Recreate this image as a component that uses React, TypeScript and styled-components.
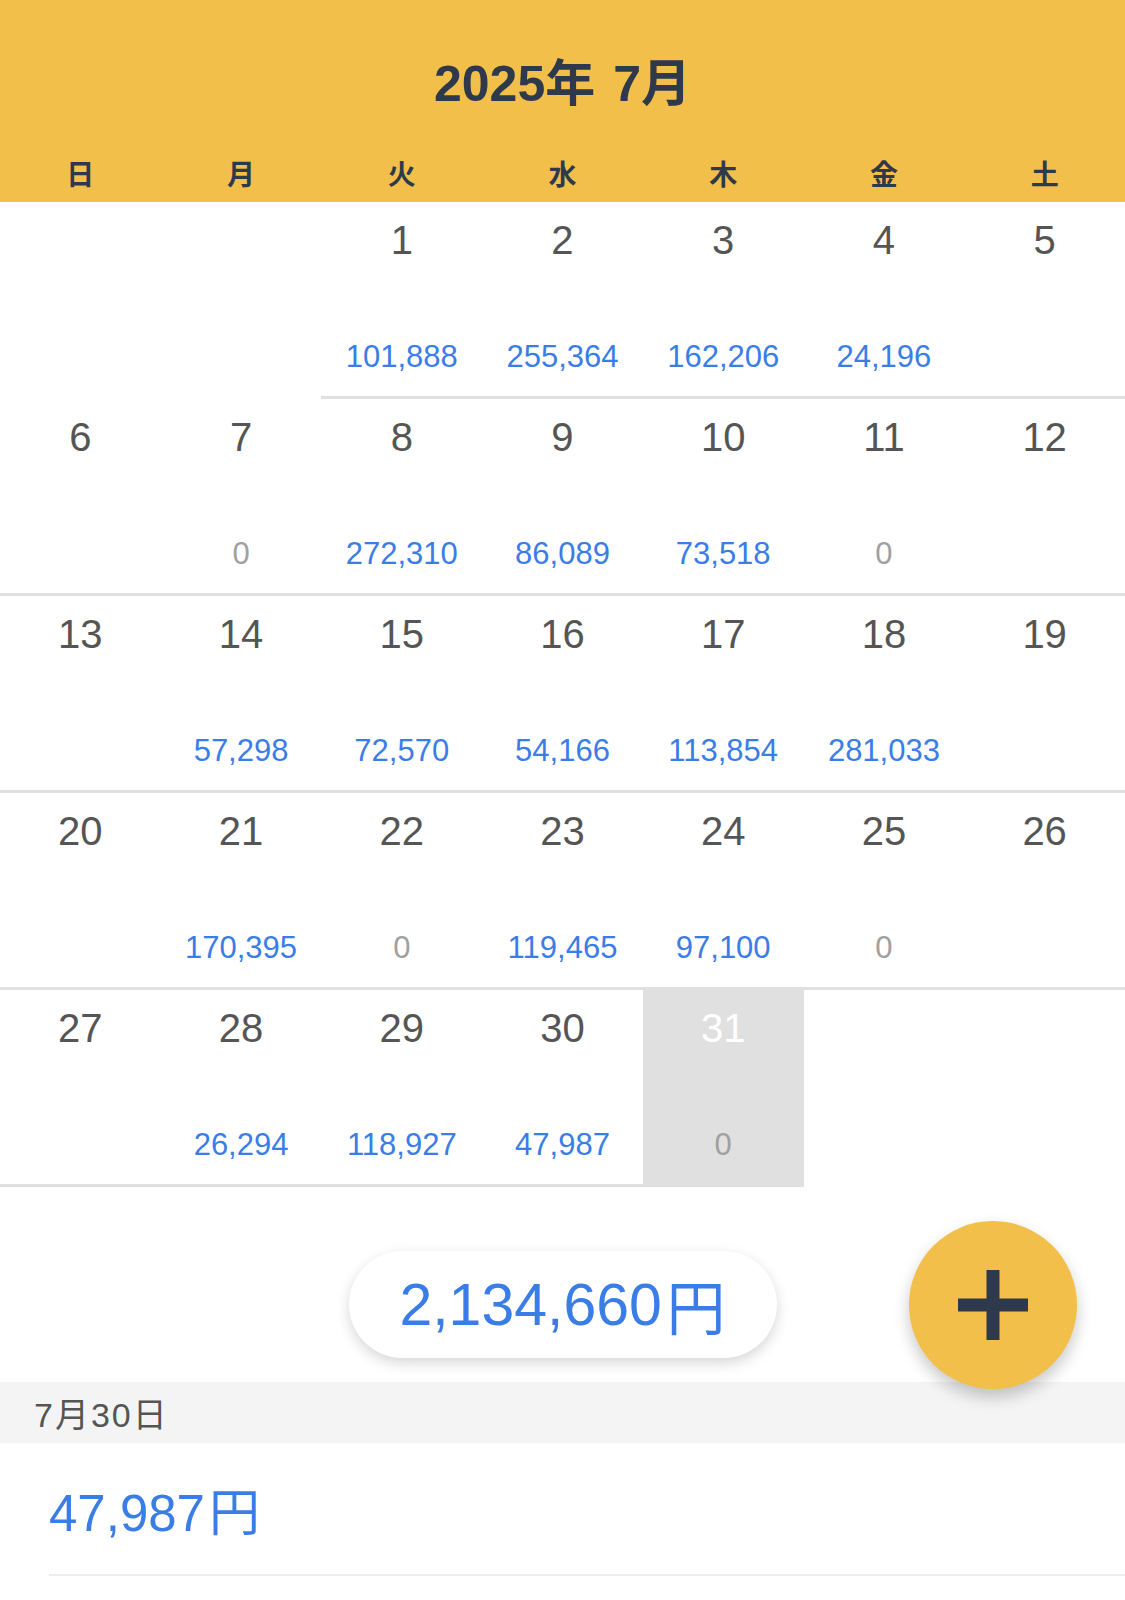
import styled, { createGlobalStyle } from "styled-components";

const GlobalStyle = createGlobalStyle`
  body {
    margin: 0;
    background: #ffffff;
    font-family: "Liberation Sans", "Noto Sans CJK JP", sans-serif;
  }
`;

const WEEKDAYS = ["日", "月", "火", "水", "木", "金", "土"];

// amounts per day in July; null = no record
const AMOUNTS: Record<number, number | null> = {
  1: 101888, 2: 255364, 3: 162206, 4: 24196, 5: null,
  6: null, 7: 0, 8: 272310, 9: 86089, 10: 73518, 11: 0, 12: null,
  13: null, 14: 57298, 15: 72570, 16: 54166, 17: 113854, 18: 281033, 19: null,
  20: null, 21: 170395, 22: 0, 23: 119465, 24: 97100, 25: 0, 26: null,
  27: null, 28: 26294, 29: 118927, 30: 47987, 31: 0,
};

const FIRST_WEEKDAY = 2; // July 1st 2025 is a Tuesday
const DAYS = 31;
const TODAY = 31;

const fmt = (n: number) => n.toLocaleString("en-US");

export default function App() {
  const cells: (number | null)[] = [];
  for (let i = 0; i < FIRST_WEEKDAY; i++) cells.push(null);
  for (let d = 1; d <= DAYS; d++) cells.push(d);
  while (cells.length % 7 !== 0) cells.push(null);

  return (
    <>
      <GlobalStyle />
      <Page>
        <Header>
          <Title>
            2025年<Gap />7月
          </Title>
          <WeekRow>
            {WEEKDAYS.map((w) => (
              <WeekLabel key={w}>{w}</WeekLabel>
            ))}
          </WeekRow>
        </Header>

        <Grid>
          {cells.map((day, i) => {
            if (day === null) return <EmptyCell key={`e${i}`} />;
            const amount = AMOUNTS[day];
            const today = day === TODAY;
            return (
              <DayCell key={day} $today={today}>
                <DayNumber $today={today}>{day}</DayNumber>
                <DayAmount $zero={amount === 0}>
                  {amount === null || amount === undefined ? "" : fmt(amount)}
                </DayAmount>
              </DayCell>
            );
          })}
        </Grid>

        <Summary>
          <TotalPill>
            2,134,660<Yen>円</Yen>
          </TotalPill>
          <AddButton aria-label="追加">
            <svg width="70" height="70" viewBox="0 0 70 70">
              <rect x="0" y="28.5" width="70" height="13" fill="#2e3a4b" />
              <rect x="28.5" y="0" width="13" height="70" fill="#2e3a4b" />
            </svg>
          </AddButton>
        </Summary>

        <DateBar>7月30日</DateBar>
        <EntryRow>
          <EntryAmount>
            47,987<Yen>円</Yen>
          </EntryAmount>
        </EntryRow>
      </Page>
    </>
  );
}

const Page = styled.div`
  width: 1125px;
  min-height: 1600px;
  background: #ffffff;
`;

const Header = styled.header`
  background: #f3bf4b;
  height: 202px;
  box-sizing: border-box;
  padding-top: 54px;
  display: flex;
  flex-direction: column;
`;

const Title = styled.h1`
  margin: 0;
  text-align: center;
  font-size: 50px;
  line-height: 60px;
  font-weight: 700;
  color: #2e3a4b;
`;

const Gap = styled.span`
  display: inline-block;
  width: 18px;
`;

const WeekRow = styled.div`
  display: grid;
  grid-template-columns: repeat(7, 1fr);
  margin-top: 44px;
`;

const WeekLabel = styled.div`
  text-align: center;
  font-size: 28px;
  line-height: 36px;
  font-weight: 700;
  color: #2e3a4b;
`;

const Grid = styled.div`
  display: grid;
  grid-template-columns: repeat(7, 1fr);
`;

const EmptyCell = styled.div`
  height: 197px;
`;

const DayCell = styled.div<{ $today: boolean }>`
  height: 197px;
  box-sizing: border-box;
  border-bottom: 3px solid #e0e0e0;
  background: ${(p) => (p.$today ? "#e0e0e0" : "transparent")};
  display: flex;
  flex-direction: column;
  align-items: center;
  justify-content: space-between;
  padding: 14px 0 21px;
`;

const DayNumber = styled.div<{ $today: boolean }>`
  font-size: 40px;
  line-height: 48px;
  color: ${(p) => (p.$today ? "#ffffff" : "#555555")};
`;

const DayAmount = styled.div<{ $zero: boolean }>`
  font-size: 31px;
  line-height: 36px;
  height: 36px;
  color: ${(p) => (p.$zero ? "#a0a0a0" : "#3a7de6")};
`;

const Summary = styled.section`
  position: relative;
  display: flex;
  justify-content: center;
  padding: 64px 0 24px;
`;

const TotalPill = styled.div`
  width: 428px;
  height: 107px;
  border-radius: 54px;
  background: #ffffff;
  box-shadow: 0 5px 14px rgba(0, 0, 0, 0.16);
  display: flex;
  align-items: center;
  justify-content: center;
  font-size: 59px;
  color: #3a7de6;
`;

const Yen = styled.span`
  margin-left: 0.08em;
`;

const AddButton = styled.button`
  position: absolute;
  right: 48px;
  top: 34px;
  width: 168px;
  height: 168px;
  border: none;
  border-radius: 50%;
  background: #f3bf4b;
  box-shadow: 0 8px 16px rgba(0, 0, 0, 0.22);
  display: flex;
  align-items: center;
  justify-content: center;
  padding: 0;
  z-index: 2;
`;

const DateBar = styled.div`
  background: #f4f4f4;
  height: 61px;
  display: flex;
  align-items: center;
  padding-left: 34px;
  font-size: 34px;
  letter-spacing: 2px;
  color: #555555;
`;

const EntryRow = styled.div`
  margin-left: 49px;
  height: 131px;
  display: flex;
  align-items: center;
  border-bottom: 2px solid #eeeeee;
`;

const EntryAmount = styled.div`
  font-size: 51px;
  color: #3a7de6;
`;
